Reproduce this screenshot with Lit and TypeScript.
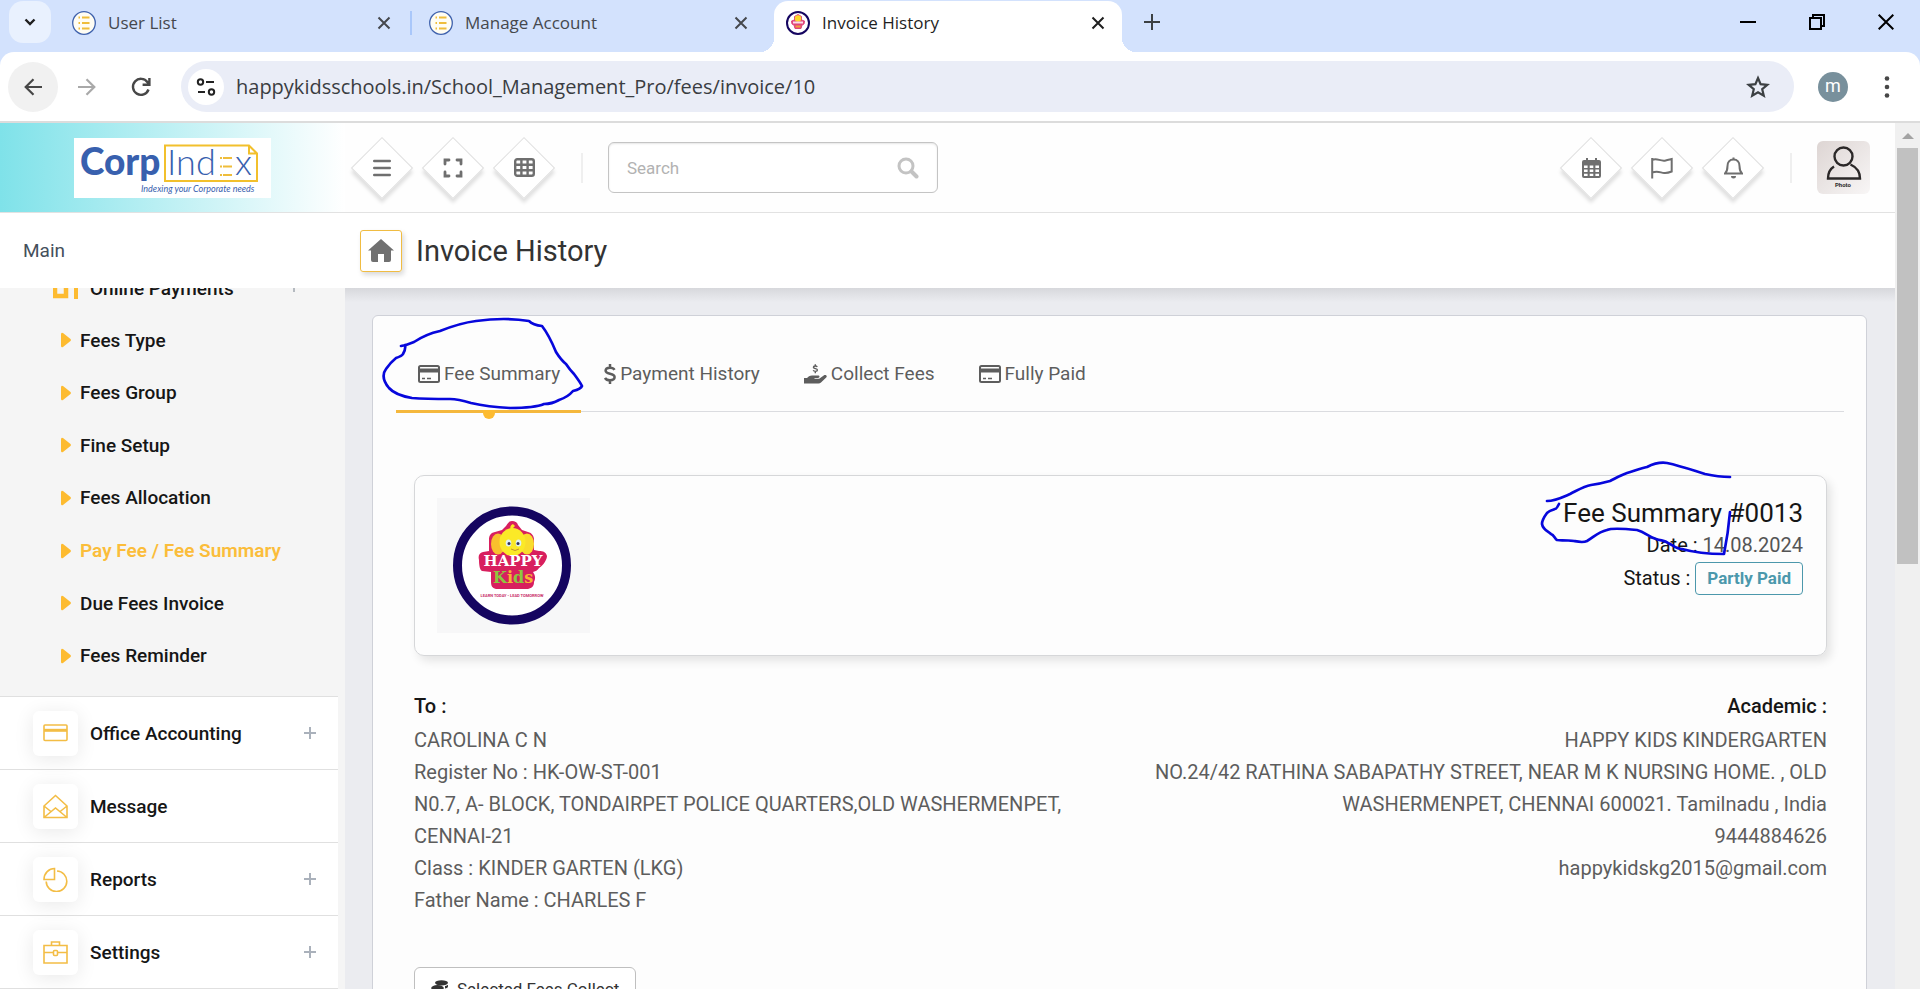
import { LitElement, html, svg, css, nothing } from "lit";
import { customElement, property } from "lit/decorators.js";
import { classMap } from "lit/directives/class-map.js";

const shared = css`
  *, *::before, *::after { box-sizing: border-box; }
  button { border: 0; padding: 0; background: none; font: inherit; color: inherit; cursor: pointer; }
  a { color: inherit; text-decoration: none; }
  ul { list-style: none; margin: 0; padding: 0; }
  svg { display: block; flex: none; }
`;

const closeIcon = svg`<svg width="14" height="14" viewBox="0 0 14 14" fill="none" stroke="currentColor" stroke-width="2"><path d="M1.500 1.500 12.500 12.500M12.500 1.500 1.500 12.500"/></svg>`;

const listFavicon = svg`<svg width="24" height="24" viewBox="0 0 24 24" fill="none">
  <circle cx="12" cy="12" r="11.300" fill="#fffdf3" stroke="#3f62ad" stroke-width="1.300"/>
  <path d="M6.500 6.500h1.500M10 6.500h7.500M6.500 12h1.500M10 12h7.500M6.500 17.500h1.500M10 17.500h7.500" stroke="#efbd3b" stroke-width="2"/></svg>`;

const kidsFavicon = svg`<svg width="24" height="24" viewBox="0 0 24 24">
  <circle cx="12" cy="12" r="11" fill="#fff" stroke="#150560" stroke-width="2"/>
  <path d="M12 3.500l3.500 2v3.500l3 1-.5 3-2 1-1 3.500H9L8 14l-2-1-.5-3 3-1V5.500z" fill="#e0457a" stroke="#e0457a"/>
  <circle cx="12" cy="7.500" r="3.200" fill="#fbd82a"/><path d="M7 11.500h10" stroke="#fbdbe6" stroke-width="2"/><path d="M9.500 15.500h5" stroke="#f0a03a" stroke-width="2"/></svg>`;

@customElement("browser-chrome")
class BrowserChrome extends LitElement {
  static styles = [shared, css`
    :host { display: block; flex: none; font-family: "Open Sans", "Noto Sans", sans-serif; background: #d3e2fd; border-bottom: 2px solid #dcdcdc; }
    .strip { display: flex; height: 52px; }
    .search-tabs { width: 42px; height: 42px; margin: 1px 4px 0 9px; border-radius: 14px; background: #e9f1fe; display: grid; place-items: center; }
    .tab { display: flex; align-items: center; gap: 12px; height: 51px; margin-top: 1px; padding: 0 21px 8px 17px; font-size: 17px; color: #45484d; }
    .tab span { flex: 1; white-space: nowrap; }
    .first { width: 357px; position: relative; }
    .first::after { content: ""; position: absolute; right: 0; top: 10px; width: 2px; height: 24px; background: #a9c7fa; }
    .second { width: 362px; padding-right: 26px; }
    .active { width: 348px; background: #fff; border-radius: 14px 14px 0 0; color: #1f1f1f; padding: 0 17px 8px 12px; position: relative; }
    .active::before, .active::after { content: ""; position: absolute; bottom: 0; width: 14px; height: 14px; }
    .active::before { left: -14px; background: radial-gradient(circle at 0 0, transparent 14px, #fff 14px); }
    .active::after { right: -14px; background: radial-gradient(circle at 100% 0, transparent 14px, #fff 14px); }
    .plus { margin-left: 22px; height: 43px; color: #3c4043; }
    .controls { margin-left: auto; display: flex; align-items: center; gap: 53px; height: 43px; padding-right: 26px; color: #000; }
    .bar { display: flex; align-items: center; height: 69px; padding: 0 30px 0 8px; background: #fff; border-radius: 14px 14px 0 0; color: #474747; }
    .nav { width: 50px; height: 50px; border-radius: 50%; display: grid; place-items: center; }
    .back { background: #f1f1f1; }
    .nav + .nav { margin-left: 4px; }
    .forward { color: #a9a9a9; }
    .omnibox { flex: 1; display: flex; align-items: center; height: 51px; margin-left: 15px; padding: 0 24px 0 7px; border-radius: 26px; background: #eaedf7; }
    .site { width: 36px; height: 36px; border-radius: 50%; background: #fff; display: grid; place-items: center; color: #222; }
    .url { flex: 1; min-width: 0; border: 0; outline: 0; background: none; margin-left: 12px; padding: 0; font: inherit; font-size: 20px; color: #3a3d42; }
    .profile { width: 30px; height: 30px; margin: 0 36px 0 24px; border-radius: 50%; background: #78909c; color: #fff; font-family: Roboto, sans-serif; font-size: 18px; line-height: 28px; text-align: center; }
  `];

  render() {
    return html`
      <div class="strip">
        <button class="search-tabs" aria-label="Search tabs"><svg width="14" height="14" viewBox="0 0 14 14" fill="none" stroke="#1f1f1f" stroke-width="2.400"><path d="M2.500 4.500 7 9l4.500-4.500"/></svg></button>
        <div class="tab first">${listFavicon}<span>User List</span><button aria-label="Close tab">${closeIcon}</button></div>
        <div class="tab second">${listFavicon}<span>Manage Account</span><button aria-label="Close tab">${closeIcon}</button></div>
        <div class="tab active">${kidsFavicon}<span>Invoice History</span><button aria-label="Close tab">${closeIcon}</button></div>
        <button class="plus" aria-label="New tab"><svg width="16" height="16" viewBox="0 0 16 16" stroke="currentColor" stroke-width="2"><path d="M8 0v16M0 8h16"/></svg></button>
        <div class="controls">
          <button aria-label="Minimize"><svg width="16" height="16" viewBox="0 0 16 16" stroke="currentColor" stroke-width="2"><path d="M0 8h16"/></svg></button>
          <button aria-label="Restore"><svg width="16" height="16" viewBox="0 0 16 16" fill="none" stroke="currentColor" stroke-width="2"><path d="M1 4h11v11H1zM4 4V1h11v11h-3"/></svg></button>
          <button aria-label="Close"><svg width="16" height="16" viewBox="0 0 16 16" stroke="currentColor" stroke-width="2"><path d="M.7.7l14.600 14.600M15.300.7.7 15.300"/></svg></button>
        </div>
      </div>
      <div class="bar">
        <button class="nav back" aria-label="Back"><svg width="18" height="18" viewBox="0 0 18 18" fill="none" stroke="currentColor" stroke-width="2.200"><path d="M18 9H2M9.500 1.200 1.700 9l7.800 7.800"/></svg></button>
        <button class="nav forward" aria-label="Forward"><svg width="18" height="18" viewBox="0 0 18 18" fill="none" stroke="currentColor" stroke-width="2.200"><path d="M0 9h16M8.500 1.200 16.300 9l-7.800 7.800"/></svg></button>
        <button class="nav" aria-label="Reload"><svg width="20" height="20" viewBox="0 0 20 20" fill="none" stroke="currentColor" stroke-width="2.400"><path d="M17.500 12.500a8 8 0 1 1-1-7.300L18 7M18.400 1v6.800h-6.800"/></svg></button>
        <div class="omnibox">
          <button class="site" aria-label="View site information"><svg width="20" height="18" viewBox="0 0 20 18" fill="none" stroke="currentColor" stroke-width="2"><circle cx="4.500" cy="4" r="2.700"/><path d="M10 4h8M2 14h7"/><circle cx="15.500" cy="14" r="2.700"/></svg></button>
          <input class="url" aria-label="Address" .value=${"happykidsschools.in/School_Management_Pro/fees/invoice/10"}>
          <button aria-label="Bookmark this tab"><svg width="24" height="24" viewBox="0 0 24 24" fill="none" stroke="#3c4043" stroke-width="2.200"><path d="M12 3l2.600 6.200 6.700.6-5.100 4.400 1.600 6.500L12 17.300l-5.800 3.400 1.600-6.500L2.700 9.800l6.700-.6z"/></svg></button>
        </div>
        <div class="profile">m</div>
        <button aria-label="Menu"><svg width="6" height="22" viewBox="0 0 6 22" fill="currentColor"><circle cx="3" cy="2.500" r="2.300"/><circle cx="3" cy="11" r="2.300"/><circle cx="3" cy="19.500" r="2.300"/></svg></button>
      </div>`;
  }
}

@customElement("diamond-button")
class DiamondButton extends LitElement {
  @property() label = "";
  static styles = [shared, css`
    :host { display: block; }
    .box { position: relative; display: grid; place-items: center; width: 62px; height: 62px; color: #6f6f6f; }
    .box::before { content: ""; position: absolute; inset: 9px; border: 1px solid #dfdfdf; background: #fff; transform: rotate(45deg); box-shadow: 3px 3px 4px rgba(0, 0, 0, 0.12); }
    .glyph { position: relative; }
  `];
  render() {
    return html`<button class="box" aria-label=${this.label}><span class="glyph"><slot></slot></span></button>`;
  }
}

@customElement("app-header")
class AppHeader extends LitElement {
  static styles = [shared, css`
    :host { display: flex; align-items: center; height: 90px; border-bottom: 1px solid #e2e2e2; background: #fefefe; }
    .brand { align-self: stretch; display: flex; align-items: center; width: 345px; padding-left: 74px; background: linear-gradient(90deg, #7fe2e9, #fff); }
    .group { display: flex; gap: 9px; }
    .left { margin-left: 6px; }
    .rule { width: 2px; height: 30px; background: #efefef; }
    .left-rule { margin: 0 25px 0 26px; }
    .right-rule { margin: 0 25px 0 26px; }
    .search { display: flex; align-items: center; width: 330px; height: 51px; padding: 0 18px; border: 1px solid #c4c4c4; border-radius: 6px; background: #fff; box-shadow: inset 0 1px 2px rgba(0, 0, 0, 0.1); }
    .search input { flex: 1; min-width: 0; border: 0; outline: 0; padding: 0; background: none; font: 17px Roboto, sans-serif; color: #555; }
    .search input::placeholder { color: #b2b2b2; }
    .right { margin-left: auto; }
    .avatar { margin-right: 25px; border-radius: 6px; overflow: hidden; }
    .photo { font: bold 6px Roboto, sans-serif; }
    .corp { font: 900 37px Lato, sans-serif; }
    .ind { font: 300 36px Lato, sans-serif; }
    .tag { font: italic 9px Lato, sans-serif; }
  `];

  render() {
    return html`
      <a class="brand" href="#" aria-label="CorpIndex">
        <svg width="197" height="60" viewBox="0 0 197 60" fill="none">
          <rect width="197" height="60" fill="#fff"/>
          <text class="corp" x="6" y="37" fill="#3860ae">Corp</text>
          <path d="M91 7.500h84l8 8v27.500H91zM175 7.500v8h8" stroke="#f2c02c" stroke-width="2"/>
          <text class="ind" x="93" y="37" fill="#3860ae">Ind</text>
          <path d="M146 20h2M149 20h9M146 28.500h2M149 28.500h9M146 37h2M149 37h9" stroke="#efbd3b" stroke-width="2"/>
          <text class="ind" x="161" y="37" fill="#3860ae">x</text>
          <text class="tag" x="67" y="54" fill="#3860ae">Indexing your Corporate needs</text>
        </svg>
      </a>
      <div class="group left">
        <diamond-button label="Toggle menu"><svg width="18" height="18" viewBox="0 0 18 18" stroke="currentColor" stroke-width="2.400" stroke-linecap="round"><path d="M1.200 2h15.600M1.200 9h15.600M1.200 16h15.600"/></svg></diamond-button>
        <diamond-button label="Full screen"><svg width="20" height="20" viewBox="0 0 20 20" fill="none" stroke="currentColor" stroke-width="2.800" stroke-linecap="round"><path d="M2 6V2h4M14 2h4v4M18 14v4h-4M6 18H2v-4"/></svg></diamond-button>
        <diamond-button label="Shortcuts"><svg width="21" height="19" viewBox="0 0 21 19" fill="none" stroke="currentColor" stroke-width="2.400"><rect x="1.200" y="1.200" width="18.600" height="16.600" rx="2"/><path d="M7.400 1v17M13.600 1v17M1 6.700h19M1 12.300h19"/></svg></diamond-button>
      </div>
      <div class="rule left-rule"></div>
      <label class="search">
        <input type="text" placeholder="Search" aria-label="Search">
        <svg width="22" height="22" viewBox="0 0 22 22" fill="none" stroke="#c3c3c3"><circle cx="9" cy="9" r="7" stroke-width="3"/><path d="M14.500 14.500l5 5" stroke-width="4" stroke-linecap="round"/></svg>
      </label>
      <div class="group right">
        <diamond-button label="Calendar"><svg width="19" height="22" viewBox="0 0 19 22"><path d="M2 3h2V1h2v2h7V1h2v2h2a2 2 0 0 1 2 2v14a2 2 0 0 1-2 2H2a2 2 0 0 1-2-2V5a2 2 0 0 1 2-2z" fill="currentColor"/><path d="M2 8.500h3.600v2.400H2zm5.700 0h3.600v2.400H7.700zm5.700 0H17v2.400h-3.600zM2 12.600h3.600V15H2zm5.700 0h3.600V15H7.700zm5.700 0H17V15h-3.600zM2 16.700h3.600V19H2zm5.700 0h3.600V19H7.700zm5.700 0H17V19h-3.600z" fill="#fff"/></svg></diamond-button>
        <diamond-button label="Flag"><svg width="22" height="22" viewBox="0 0 22 22" fill="none" stroke="currentColor" stroke-width="2"><path d="M1.200 1v20.500M1.200 3c5-2.600 8 1.800 13.500.5 2-.4 4-1 6-1.500v12.500c-2.500 1-4.500 1.800-7.500 1.500-4-.4-7-2.500-12-.3"/></svg></diamond-button>
        <diamond-button label="Notifications"><svg width="19" height="22" viewBox="0 0 19 22"><path d="M9.500 2.500c-4 0-6 3-6 6.500 0 4-1 6-2.500 7.500h17c-1.500-1.500-2.500-3.500-2.500-7.500 0-3.500-2-6.500-6-6.500z" fill="none" stroke="currentColor" stroke-width="2"/><path d="M8.500.5h2V3h-2zM7 19h5a2.500 2.500 0 0 1-5 0z" fill="currentColor"/></svg></diamond-button>
      </div>
      <div class="rule right-rule"></div>
      <a class="avatar" href="#" aria-label="Profile">
        <svg width="53" height="53" viewBox="0 0 53 53" fill="none">
          <defs><linearGradient id="wash" x1="0" y1="0" x2="1" y2="1"><stop offset="0" stop-color="#ddd5d3"/><stop offset="1" stop-color="#f8f6f6"/></linearGradient></defs>
          <rect width="53" height="53" fill="url(#wash)"/>
          <circle cx="26.500" cy="15.500" r="9" stroke="#2b2828" stroke-width="2.400"/>
          <path d="M17 25.500c-4 2.500-6 7-6 12h32c0-7-4-11.500-9.500-14" stroke="#2b2828" stroke-width="2.400"/>
          <text class="photo" x="18" y="46" fill="#2b2828">Photo</text>
        </svg>
      </a>`;
  }
}

const menuIcons: Record<string, unknown> = {
  card: svg`<rect x="1" y="4" width="23" height="15.500" rx="1"/><path d="M1 9.300h23" stroke-width="3"/>`,
  mail: svg`<path d="M1 12 12.500 1.500 24 12v11.500H1zM1 12l7.500 6M24 12l-7.500 6M1 23.500 12.500 14 24 23.500"/>`,
  pie: svg`<path d="M11.500 12.500H1C1 6 6 1.500 11.500 1.500zM14 4a10.300 10.300 0 1 1-10.800 10.500"/>`,
  case: svg`<path d="M1 5.500h23v17.500H1zM8.500 5.500V2h8v3.500M1 12.500h9.500M14.500 12.500H24"/><rect x="10.500" y="10.500" width="4" height="5" rx="1"/>`,
};

@customElement("side-menu")
class SideMenu extends LitElement {
  static styles = [shared, css`
    :host { display: block; width: 345px; flex: none; overflow: hidden; background: #f5f5f5; font: 500 19px Roboto, sans-serif; color: #161616; }
    .parent { display: flex; align-items: center; height: 52px; margin-top: -26px; padding: 0 47px 0 53px; }
    .parent span { flex: 1; padding-left: 12px; }
    .sub { display: grid; grid-auto-rows: 1fr; height: 368px; margin-bottom: 14px; }
    .sub a { display: flex; align-items: center; gap: 9px; height: 100%; padding-left: 61px; }
    .current { color: #fbbd3a; font-weight: 600; }
    .top { width: 338px; background: #fff; border-bottom: 1px solid #e0e0e0; }
    .top > li { border-top: 1px solid #e0e0e0; }
    .top a { display: flex; align-items: center; height: 72px; padding: 0 22px 0 33px; }
    .top span { flex: 1; padding-left: 12px; }
    .tile { display: grid; place-items: center; width: 45px; height: 45px; border-radius: 6px; background: #fff; box-shadow: 0 3px 20px rgba(0, 0, 0, 0.09); }
  `];

  private subItems = ["Fees Type", "Fees Group", "Fine Setup", "Fees Allocation", "Pay Fee / Fee Summary", "Due Fees Invoice", "Fees Reminder"];
  private items = [
    { text: "Office Accounting", icon: "card", open: true },
    { text: "Message", icon: "mail", open: false },
    { text: "Reports", icon: "pie", open: true },
    { text: "Settings", icon: "case", open: true },
  ];

  render() {
    return html`<nav>
      <a class="parent" href="#"><svg width="25" height="24" viewBox="0 0 25 24" fill="none" stroke="#fdbb30" stroke-width="4"><path d="M2 0v20h11V0" stroke-width="4.500"/><path d="M23 0v23"/></svg>
        <span>Online Payments</span><svg width="8" height="8" viewBox="0 0 8 8" stroke="#b5bac0" stroke-width="2"><path d="M4 0v8"/></svg></a>
      <ul class="sub">${this.subItems.map((text, i) => html`<li><a href="#" class=${classMap({ current: i === 4 })}>
        <svg width="10" height="16" viewBox="0 0 10 16"><path d="M0 2.200Q0 0 2 1l7.500 6q.8 1 0 2L2 15q-2 1-2-1.200z" fill="#fdbb30"/></svg>${text}</a></li>`)}</ul>
      <ul class="top">${this.items.map(({ text, icon, open }) => html`<li><a href="#">
        <i class="tile"><svg width="25" height="25" viewBox="0 0 25 25" fill="none" stroke="#f3bd45" stroke-width="1.600">${menuIcons[icon]}</svg></i>
        <span>${text}</span>${open ? html`<svg width="12" height="12" viewBox="0 0 12 12" stroke="#aab1bb" stroke-width="2"><path d="M6 0v12M0 6h12"/></svg>` : nothing}</a></li>`)}</ul>
    </nav>`;
  }
}

const cardIcon = svg`<svg width="22" height="18" viewBox="0 0 22 18" fill="none" stroke="currentColor" stroke-width="2"><rect x="1" y="1" width="20" height="16" rx="1.500"/><path d="M1 5.500h20" stroke-width="4"/><path d="M4 13.500h3M9 13.500h4" stroke-width="1.600"/></svg>`;
const dollarIcon = svg`<svg width="12" height="20" viewBox="0 0 12 20" fill="none" stroke="currentColor" stroke-width="2.500"><path d="M10.500 5.800C9.500 4 7.500 3.700 6 3.700 3.500 3.700 1.600 4.700 1.600 6.800c0 4 9 2 9 6.300 0 2.200-2 3.200-4.600 3.200-2.200 0-4-.6-5-2.400M6 0v4M6 16v4"/></svg>`;
const handIcon = svg`<svg width="23" height="20" viewBox="0 0 23 20"><path d="M13.200 3C12.800 2.200 12 2 11.300 2 10.200 2 9.400 2.500 9.400 3.300c0 1.700 4 .9 4 2.700 0 .9-.9 1.400-2 1.400-1 0-1.800-.3-2.200-1.100M11.300.2V2M11.300 7.400v1.800" fill="none" stroke="currentColor" stroke-width="1.400"/><path d="M0 14h3l2-1.700c1-.7 2-.9 3-.9h6c2 0 2 2.300 0 2.600h-3.500v.7h4.700l4.500-3.100c2-1.400 4 .6 2.500 2L17 18.600c-.8.700-1.500 1-2.500 1H0z" fill="currentColor"/></svg>`;
const coinsIcon = svg`<svg width="19" height="19" viewBox="0 0 19 19" fill="currentColor"><ellipse cx="10.500" cy="2.800" rx="6.500" ry="2.600"/><ellipse cx="6.500" cy="8" rx="6.300" ry="3"/><path d="M.3 11c2 2.200 10 2.200 12.400 0v3c-2 2.400-10.400 2.400-12.400 0zM.3 15.500c2 2.200 10 2.200 12.400 0V17c-2 2.400-10.400 2.400-12.400 0zM14 6c1.500-.2 2.500-.7 3-1.200v2c-.5 1-1.500 1.500-3 1.700zM14 10c1.500-.2 2.500-.7 3-1.200v2c-.5 1-1.500 1.500-3 1.700z"/></svg>`;

@customElement("invoice-panel")
class InvoicePanel extends LitElement {
  static styles = [shared, css`
    :host { display: block; padding: 21px 22px 0 23px; border: 1px solid #cfd1d8; border-radius: 6px; background: #fdfdfd; font: 20px Roboto, sans-serif; color: #5d5d5d; }
    .tabs { display: flex; gap: 1px; border-bottom: 1px solid #dbdce0; }
    .tab { position: relative; display: flex; align-items: center; gap: 4px; height: 73px; padding: 0 21px 0 22px; font-size: 19px; }
    .selected { margin-bottom: -2px; height: 76px; border-bottom: 3px solid #f5b83d; }
    .selected::after { content: ""; position: absolute; left: calc(50% - 6px); top: 73px; width: 12px; height: 9px; border-radius: 0 0 6px 6px; background: #fdbb30; }
    .pen { position: absolute; z-index: 1; pointer-events: none; fill: none; stroke: #0707dc; stroke-width: 2.700; stroke-linejoin: round; stroke-linecap: round; }
    .pen-tab { left: -16px; top: -22px; }
    .pen-title { right: 92px; top: -16px; }
    .pane { padding: 0 17px 0 18px; }
    .summary { position: relative; display: flex; justify-content: space-between; margin-top: 63px; padding: 22px 23px 22px 22px; border: 1px solid #d6d7d9; border-radius: 10px; box-shadow: 4px 5px 10px rgba(0, 0, 0, 0.1); }
    .facts { text-align: right; color: #161616; }
    .facts h2 { margin: 0; font-weight: 400; font-size: 26px; line-height: 31px; }
    .facts p { margin: 0; line-height: 32px; }
    .facts p + p { line-height: 34px; }
    .facts em { font-style: normal; color: #555; }
    .badge { display: inline-block; height: 33px; padding: 0 11px; border: 1px solid #4c98ac; border-radius: 4px; color: #4c98ac; font-size: 17px; font-weight: 700; line-height: 31px; vertical-align: bottom; }
    .parties { display: grid; grid-template-columns: 1fr 1fr; margin-top: 35px; }
    .parties h3 { margin: 0 0 2px; font-size: 20px; font-weight: 500; line-height: 31px; color: #161616; }
    .parties p { margin: 0; line-height: 32px; }
    .to { padding-right: 22px; }
    .academic { text-align: right; padding-left: 22px; }
    .collect { display: flex; align-items: center; gap: 7px; height: 44px; margin-top: 51px; padding: 0 16px; border: 1px solid #bfbfbf; border-radius: 6px; background: #fff; color: #333; font-size: 17px; }
    .happy { font: bold 15px "DejaVu Serif", serif; }
    .kids { font: bold 16px "DejaVu Serif", serif; }
    .motto { font: bold 4px Roboto, sans-serif; }
  `];

  render() {
    return html`
      <nav class="tabs">
        <a class="tab selected" href="#">${cardIcon}Fee Summary
          <svg class="pen pen-tab" width="204" height="98" viewBox="380 315 204 98"><path d="M401 346 406 345 414 342Q426 334 440 331 460 323 476 321 505 317 529 321 533 325 542 326 549 335 556 352 561 360 566 364 570 370 574 374 580 382 582 386 581 389 573 391 568 397 559 400 552 404 544 404 535 408 510 408 488 407 471 403 458 399 450 399 425 399 412 398 395 395 389 388 380 377 386 369 391 362 396 358 402 356 403 354 406 349 405 345"/></svg></a>
        <a class="tab" href="#">${dollarIcon}Payment History</a>
        <a class="tab" href="#">${handIcon}Collect Fees</a>
        <a class="tab" href="#">${cardIcon}Fully Paid</a>
      </nav>
      <div class="pane">
        <section class="summary">
          <svg width="153" height="135" viewBox="0 0 153 135" role="img" aria-label="Happy Kids">
            <rect width="153" height="135" fill="#f7f7f8"/>
            <circle cx="75" cy="67.500" r="54.500" fill="#fff" stroke="#150560" stroke-width="9"/>
            <path d="M75 23c-3 0-4 2-6 5l-4 4-7 2c-5 1-6 4-6 8v11l-6 1c-4 1-5 4-4 8 0 6 1 10 3 11l9 1v9c0 5 1 7 5 8h32c4-1 6-3 6-7 2-4 1-7-1-10 3-1 5-2 6-4 5-3 8-9 8-12-1-4-4-5-8-5l-5-1V42c0-4-2-7-6-8l-6-2-4-5c-1-3-3-4-6-4z" fill="#d81f5e"/>
            <ellipse cx="61" cy="46" rx="7" ry="10.500" fill="#f9c02d"/><ellipse cx="90" cy="46" rx="7" ry="10.500" fill="#f9dc2d"/>
            <ellipse cx="75.500" cy="44" rx="13" ry="14" fill="#fbe927"/>
            <path d="M75 31c-1-3 1-3 2-4" stroke="#fbe927" stroke-width="3" fill="none"/>
            <ellipse cx="71.500" cy="45" rx="2.800" ry="3.500" fill="#dff1f4"/><ellipse cx="81.500" cy="45" rx="2.800" ry="3.500" fill="#dff1f4"/>
            <circle cx="72" cy="45.500" r="1.500" fill="#335"/><circle cx="81" cy="45.500" r="1.500" fill="#335"/>
            <path d="M74 51q4 3 8 0" stroke="#c6932c" fill="none"/>
            <text class="happy" x="76" y="68" fill="#fff" text-anchor="middle">HAPPY</text>
            <text class="kids" x="56" y="85"><tspan fill="#8dc63f">K</tspan><tspan fill="#f9b233">i</tspan><tspan fill="#8dc63f">d</tspan><tspan fill="#f9b233">s</tspan></text>
            <text class="motto" x="75" y="99" fill="#c9316b" text-anchor="middle">LEARN TODAY • LEAD TOMORROW</text>
          </svg>
          <div class="facts">
            <h2>Fee Summary #0013</h2>
            <p>Date : <em>14.08.2024</em></p>
            <p>Status : <span class="badge">Partly Paid</span></p>
          </div>
          <svg class="pen pen-title" width="194" height="98" viewBox="1540 460 194 98"><path d="M1547 501c8 0 16-4 23-7 8-4 14-8 21-9 7-1 12-2 19-4 6-3 11-6 17-8 7-2 14-5 20-6 8-4 14-5 20-4 14 3 25 7 38 11 9 2 16 3 25 3M1559 504c-2 4-3 5-4 5-3 1-6 2-8 4-3 4-5 8-5 11 1 6 6 7 9 10 3 1 4 5 6 6 10 1 14 0 17 1 5 1 9 2 13 0 7-4 11-9 20-11 4-2 20-1 30 0 8 2 12 7 19 9 5 2 9 1 12 4 5 2 8 6 14 6 14 4 28 5 42 5 2-10 5-30 6-42"/></svg>
        </section>
        <section class="parties">
          <div class="to">
            <h3>To :</h3>
            <p>CAROLINA C N</p>
            <p>Register No : HK-OW-ST-001</p>
            <p>N0.7, A- BLOCK, TONDAIRPET POLICE QUARTERS,OLD WASHERMENPET, CENNAI-21</p>
            <p>Class : KINDER GARTEN (LKG)</p>
            <p>Father Name : CHARLES F</p>
          </div>
          <div class="academic">
            <h3>Academic :</h3>
            <p>HAPPY KIDS KINDERGARTEN</p>
            <p>NO.24/42 RATHINA SABAPATHY STREET, NEAR M K NURSING HOME. , OLD WASHERMENPET, CHENNAI 600021. Tamilnadu , India</p>
            <p>9444884626</p>
            <p>happykidskg2015@gmail.com</p>
          </div>
        </section>
        <button class="collect">${coinsIcon}Selected Fees Collect</button>
      </div>`;
  }
}

@customElement("app-root")
class AppRoot extends LitElement {
  static styles = [shared, css`
    :host { display: flex; flex-direction: column; height: 100vh; overflow: hidden; font-family: Roboto, sans-serif; }
    .window { flex: 1; min-height: 0; display: flex; background: #ebecf0; }
    .page { flex: 1; min-width: 0; display: flex; flex-direction: column; }
    .heading { position: relative; z-index: 1; display: flex; align-items: center; flex: none; height: 75px; background: #fff; }
    .section { width: 360px; padding-left: 23px; font-size: 19px; color: #45505c; }
    .home { display: grid; place-items: center; width: 42px; height: 42px; border: 1px solid #f0bc42; border-radius: 3px; box-shadow: 2px 3px 5px rgba(0, 0, 0, 0.15); }
    h1 { margin: 0 0 0 14px; font-size: 29px; font-weight: 400; color: #333; }
    .body { flex: 1; min-height: 0; display: flex; }
    .content { flex: 1; min-width: 0; padding: 27px 28px 0 27px; overflow: hidden; background: linear-gradient(#d7d8dc, #ebecf0 14px); }
    .panel { min-height: 100%; padding-bottom: 40px; }
    .scrollbar { flex: none; width: 25px; padding: 10px 2px 0; background: #f0f0f0; }
    .scrollbar svg { margin: 0 auto; }
    .thumb { height: 416px; margin-top: 9px; background: #c1c1c1; }
  `];

  render() {
    return html`
      <browser-chrome></browser-chrome>
      <div class="window">
        <div class="page">
          <app-header></app-header>
          <div class="heading">
            <div class="section">Main</div>
            <a class="home" href="#" aria-label="Home"><svg width="26" height="23" viewBox="0 0 26 23"><path d="M13 0 26 11.500h-3V21q0 2-2 2h-5v-8h-6v8H5q-2 0-2-2v-9.500H0z" fill="#707070"/></svg></a>
            <h1>Invoice History</h1>
          </div>
          <div class="body">
            <side-menu></side-menu>
            <main class="content"><invoice-panel class="panel"></invoice-panel></main>
          </div>
        </div>
        <div class="scrollbar"><svg width="12" height="6" viewBox="0 0 12 6"><path d="M6 0l6 6H0z" fill="#a3a3a3"/></svg><div class="thumb"></div></div>
      </div>`;
  }
}
